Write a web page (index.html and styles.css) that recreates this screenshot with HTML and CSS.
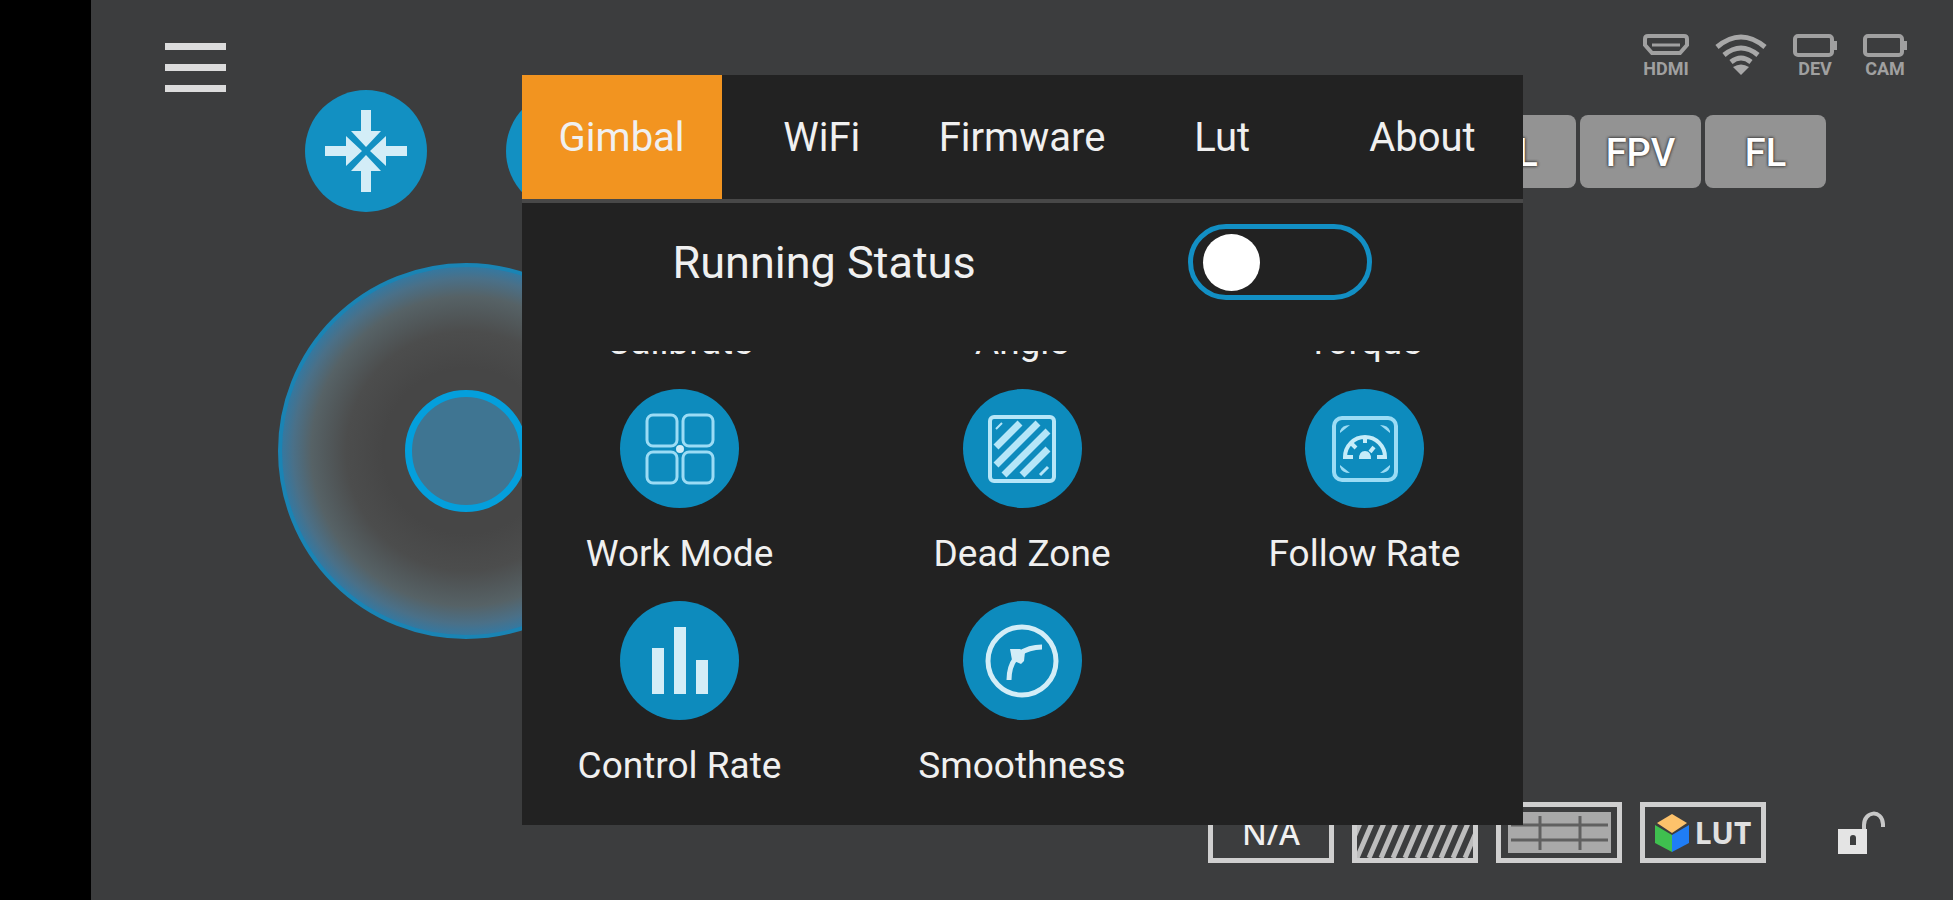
FILE: index.html
```html
<!DOCTYPE html>
<html lang="en">
<head>
    <meta charset="UTF-8">
    <meta name="viewport" content="width=device-width, initial-scale=1.0">
    <title>Gimbal Remote</title>
    <link rel="stylesheet" href="styles.css">
</head>
<body>
    <div class="screen">
        <header class="topbar">
            <button class="icon-btn" aria-label="Menu">
                <svg width="62" height="50" viewBox="0 0 62 50" fill="#dcdcdc">
                    <rect width="61" height="7"/>
                    <rect y="21" width="61" height="7"/>
                    <rect y="42" width="61" height="7"/>
                </svg>
            </button>
            <div class="status-bar">
                <div class="status">
                    <svg width="46" height="21" viewBox="0 0 46 21" fill="none" stroke="#a0a0a0" stroke-width="4">
                        <path d="M5 2h36q3 0 3 3v6l-7 8H9l-7-8V5q0-3 3-3z"/>
                        <path d="M9 11h28" stroke-width="3"/>
                    </svg>
                    <span>HDMI</span>
                </div>
                <div class="status">
                    <svg width="52" height="42" viewBox="0 0 52 42" fill="none" stroke="#a8a8a8" stroke-width="5">
                        <path d="M2 13q24-20 48 0"/>
                        <path d="M9 21q17-14 34 0"/>
                        <path d="M16 28q10-8 20 0"/>
                        <path d="M18 33q8-5 16 0l-8 8z" fill="#a8a8a8" stroke="none"/>
                    </svg>
                </div>
                <div class="status">
                    <svg width="44" height="24" viewBox="0 0 44 24" fill="none" stroke="#a0a0a0" stroke-width="4">
                        <rect x="2" y="2" width="37" height="19" rx="3"/>
                        <path d="M42 7v9"/>
                    </svg>
                    <span>DEV</span>
                </div>
                <div class="status">
                    <svg width="44" height="24" viewBox="0 0 44 24" fill="none" stroke="#a0a0a0" stroke-width="4">
                        <rect x="2" y="2" width="37" height="19" rx="3"/>
                        <path d="M42 7v9"/>
                    </svg>
                    <span>CAM</span>
                </div>
            </div>
        </header>

        <div class="controls">
            <div class="quick-actions">
                <button class="round-btn" aria-label="Recenter">
                    <svg width="84" height="84" viewBox="-42 -42 84 84" fill="#d3edf7">
                        <path id="arrow" d="M-5-41H5V-20H15L0-4-15-20H-5z"/>
                        <use href="#arrow" transform="rotate(90)"/>
                        <use href="#arrow" transform="rotate(180)"/>
                        <use href="#arrow" transform="rotate(270)"/>
                    </svg>
                </button>
                <button class="round-btn" aria-label="Selfie"></button>
            </div>
            <div class="modes">
                <button class="mode-btn">PL</button>
                <button class="mode-btn">FPV</button>
                <button class="mode-btn">FL</button>
            </div>
        </div>

        <div class="joystick">
            <div class="stick"></div>
        </div>

        <footer class="toolbar">
            <button class="tool-btn">N/A</button>
            <button class="tool-btn" aria-label="Zebra">
                <svg width="116" height="51" viewBox="0 0 116 51" stroke="#bdbdbd" stroke-width="5">
                    <path d="M-12 51L10 0M0 51L22 0M12 51L34 0M24 51L46 0M36 51L58 0M48 51L70 0M60 51L82 0M72 51L94 0M84 51L106 0M96 51L118 0M108 51L130 0"/>
                </svg>
            </button>
            <button class="tool-btn" aria-label="Grid">
                <svg width="103" height="41" viewBox="0 0 103 41">
                    <rect width="103" height="41" fill="#a9a9a9"/>
                    <path d="M32 4v34M72 4v34M3 13h97M3 28h97" stroke="#606060" stroke-width="3"/>
                </svg>
            </button>
            <button class="tool-btn lut">
                <svg width="34" height="38" viewBox="0 0 34 38">
                    <path d="M17 0l15 9-15 10L2 9z" fill="#fdc26b"/>
                    <path d="M0 11l17 10v17L0 29z" fill="#3fc04f"/>
                    <path d="M34 11L17 21v17l17-9z" fill="#1f7df5"/>
                </svg>
                LUT
            </button>
            <button class="icon-btn lock" aria-label="Unlock">
                <svg width="48" height="44" viewBox="0 0 48 44">
                    <path d="M26 20V14c0-14 18-16 19-1v3" fill="none" stroke="#c8c8c8" stroke-width="4"/>
                    <path d="M0 18h29v25H0z" fill="#e4e4e4"/>
                    <path d="M12 27a3 3 0 0 1 6 0v7h-6z" fill="#3c3d3e"/>
                </svg>
            </button>
        </footer>

        <div class="overlay">
            <div class="dialog" role="dialog" aria-label="Settings">
                <nav class="tabs">
                    <button class="tab active">Gimbal</button>
                    <button class="tab">WiFi</button>
                    <button class="tab">Firmware</button>
                    <button class="tab">Lut</button>
                    <button class="tab">About</button>
                </nav>

                <div class="running">
                    <label for="running">Running Status</label>
                    <input type="checkbox" id="running" class="switch">
                </div>

                <div class="options">
                    <div class="option-row">
                        <button class="option"><span class="option-icon"></span>Calibrate</button>
                        <button class="option"><span class="option-icon"></span>Angle</button>
                        <button class="option"><span class="option-icon"></span>Torque</button>
                    </div>
                    <div class="option-row">
                        <button class="option">
                            <span class="option-icon">
                                <svg width="70" height="72" viewBox="0 0 70 72" fill="none" stroke="#9bdcf5" stroke-width="3">
                                    <rect x="2" y="2" width="30" height="31" rx="6"/>
                                    <rect x="38" y="2" width="30" height="31" rx="6"/>
                                    <rect x="2" y="39" width="30" height="31" rx="6"/>
                                    <rect x="38" y="39" width="30" height="31" rx="6"/>
                                    <circle cx="35" cy="36" r="4" fill="#d3edf7" stroke="none"/>
                                </svg>
                            </span>
                            Work Mode
                        </button>
                        <button class="option">
                            <span class="option-icon">
                                <svg width="68" height="68" viewBox="0 0 68 68" fill="none" stroke="#b5e6f8">
                                    <rect x="2" y="2" width="64" height="64" rx="4" stroke-width="4"/>
                                    <path d="M8 14L14 8" stroke-width="2"/>
                                    <path d="M8 32L32 8M8 50L50 8M16 60L60 16M34 60L60 34" stroke-width="7"/>
                                    <path d="M52 60L60 52" stroke-width="3"/>
                                </svg>
                            </span>
                            Dead Zone
                        </button>
                        <button class="option">
                            <span class="option-icon">
                                <svg width="66" height="66" viewBox="0 0 66 66" fill="none" stroke="#9bdcf5">
                                    <rect x="2" y="2" width="62" height="62" rx="8" stroke-width="4"/>
                                    <path d="M8 15q2-6 10-6L8 17zM58 15q-2-6-10-6l10 8zM8 51q2 6 10 6L8 49zM58 51q-2 6-10 6l10-8z" fill="#9bdcf5" stroke="none"/>
                                    <path d="M21 41h-8a20 20 0 0 1 40 0h-8M33 21v6M20 28l4 4M38 36l4-5" stroke="#c6ecf9" stroke-width="4"/>
                                    <path d="M27 43q0-8 6-8t6 8z" fill="#c6ecf9" stroke="none"/>
                                </svg>
                            </span>
                            Follow Rate
                        </button>
                    </div>
                    <div class="option-row">
                        <button class="option">
                            <span class="option-icon">
                                <svg width="56" height="68" viewBox="0 0 56 68" fill="#d3edf7">
                                    <rect y="21" width="12" height="46"/>
                                    <rect x="22" width="12" height="67"/>
                                    <rect x="44" y="33" width="12" height="34"/>
                                </svg>
                            </span>
                            Control Rate
                        </button>
                        <button class="option">
                            <span class="option-icon">
                                <svg width="74" height="76" viewBox="0 0 74 76" fill="none" stroke="#d3edf7" stroke-width="5">
                                    <circle cx="37" cy="38" r="34"/>
                                    <path d="M24 57q0-13 6-21M34 31q10-7 23-7"/>
                                    <path d="M25 26h10l5 3-1 9-3 3-9-4z" fill="#d3edf7" stroke="none"/>
                                </svg>
                            </span>
                            Smoothness
                        </button>
                        <div class="option"></div>
                    </div>
                </div>
            </div>
        </div>
    </div>
</body>
</html>
```
FILE: styles.css
```css
* {
    box-sizing: border-box;
}

body {
    margin: 0;
    background: #000;
    color: #f0f0f0;
    font-family: Roboto, "Liberation Sans", sans-serif;
}

button {
    padding: 0;
    border: none;
    background: none;
    color: inherit;
    font: inherit;
    cursor: pointer;
}

svg {
    display: block;
    flex: none;
}

.screen {
    position: relative;
    display: flex;
    flex-direction: column;
    min-height: 100vh;
    margin-left: 91px;
    background: #3c3d3e;
    overflow: hidden;
}

.topbar {
    display: flex;
    justify-content: space-between;
    height: 90px;
    padding: 34px 46px 0 74px;
}

.topbar .icon-btn {
    align-self: flex-start;
    margin-top: 9px;
}

.status-bar {
    display: flex;
    gap: 26px;
}

.status {
    display: flex;
    flex-direction: column;
    align-items: center;
    justify-content: space-between;
    height: 43px;
    color: #a0a0a0;
    font-size: 18px;
    font-weight: bold;
    line-height: 16px;
}

.controls {
    display: flex;
    justify-content: space-between;
    align-items: center;
    padding: 0 127px 0 214px;
}

.quick-actions {
    display: flex;
    gap: 79px;
}

.round-btn {
    display: flex;
    align-items: center;
    justify-content: center;
    width: 122px;
    height: 122px;
    border-radius: 50%;
    background: #1290c2;
}

.modes {
    display: flex;
    gap: 4px;
}

.mode-btn {
    width: 121px;
    height: 73px;
    padding-top: 4px;
    border-radius: 8px;
    background: #939393;
    color: #fff;
    font-size: 38px;
    font-weight: 500;
    text-shadow: 0 0 3px #333, 0 0 3px #333;
}

.joystick {
    display: flex;
    align-items: center;
    justify-content: center;
    width: 376px;
    height: 376px;
    margin: 51px 0 0 187px;
    border: 4px solid #1a84b4;
    border-radius: 50%;
    background: radial-gradient(closest-side, #464646 45%, #4c4d4d 65%, #566266 84%, #4a7088 94%, #3578a0 100%);
}

.stick {
    width: 122px;
    height: 122px;
    border: 7px solid #049fdc;
    border-radius: 50%;
    background: #3f7592;
}

.toolbar {
    display: flex;
    align-items: center;
    justify-content: flex-end;
    gap: 18px;
    margin-top: auto;
    padding: 0 67px 37px 0;
}

.tool-btn {
    display: flex;
    align-items: center;
    justify-content: center;
    gap: 6px;
    width: 126px;
    height: 61px;
    border: 5px solid #cfcfcf;
    font-family: "Noto Sans", sans-serif;
    font-size: 32px;
    font-weight: 500;
    overflow: hidden;
}

.lut {
    color: #e0e0e0;
    font-size: 30px;
    font-weight: bold;
}

.lock {
    margin-left: 54px;
}

.overlay {
    position: absolute;
    inset: 0;
    display: flex;
    align-items: center;
    justify-content: center;
}

.dialog {
    display: flex;
    flex-direction: column;
    width: 1001px;
    max-width: 96%;
    background: #222;
}

.tabs {
    display: flex;
    border-bottom: 4px solid #484848;
}

.tab {
    flex: 1 1 0;
    height: 124px;
    font-size: 40px;
}

.tab.active {
    background: #f29420;
}

.running {
    display: flex;
    align-items: center;
    justify-content: space-between;
    height: 118px;
    padding: 0 151px;
    font-size: 45px;
}

.switch {
    appearance: none;
    display: flex;
    align-items: center;
    width: 184px;
    height: 76px;
    margin: 0;
    padding: 0 10px;
    border: 5px solid #128fc4;
    border-radius: 38px;
    cursor: pointer;
}

.switch::before {
    content: "";
    width: 57px;
    height: 57px;
    border-radius: 50%;
    background: #fff;
}

.switch:checked {
    justify-content: flex-end;
}

/* scrolled to the last row */
.options {
    display: flex;
    flex-direction: column;
    justify-content: flex-end;
    height: 474px;
    margin-top: 30px;
    padding: 0 58px 12px;
    overflow: hidden;
}

.option-row {
    display: flex;
    flex: none;
    justify-content: space-between;
    height: 212px;
}

.option {
    display: flex;
    flex-direction: column;
    align-items: center;
    gap: 22px;
    width: 200px;
    font-size: 37px;
    line-height: 48px;
    white-space: nowrap;
}

.option-icon {
    display: flex;
    flex: none;
    align-items: center;
    justify-content: center;
    width: 119px;
    height: 119px;
    border-radius: 50%;
    background: #0d8bbd;
}
```
